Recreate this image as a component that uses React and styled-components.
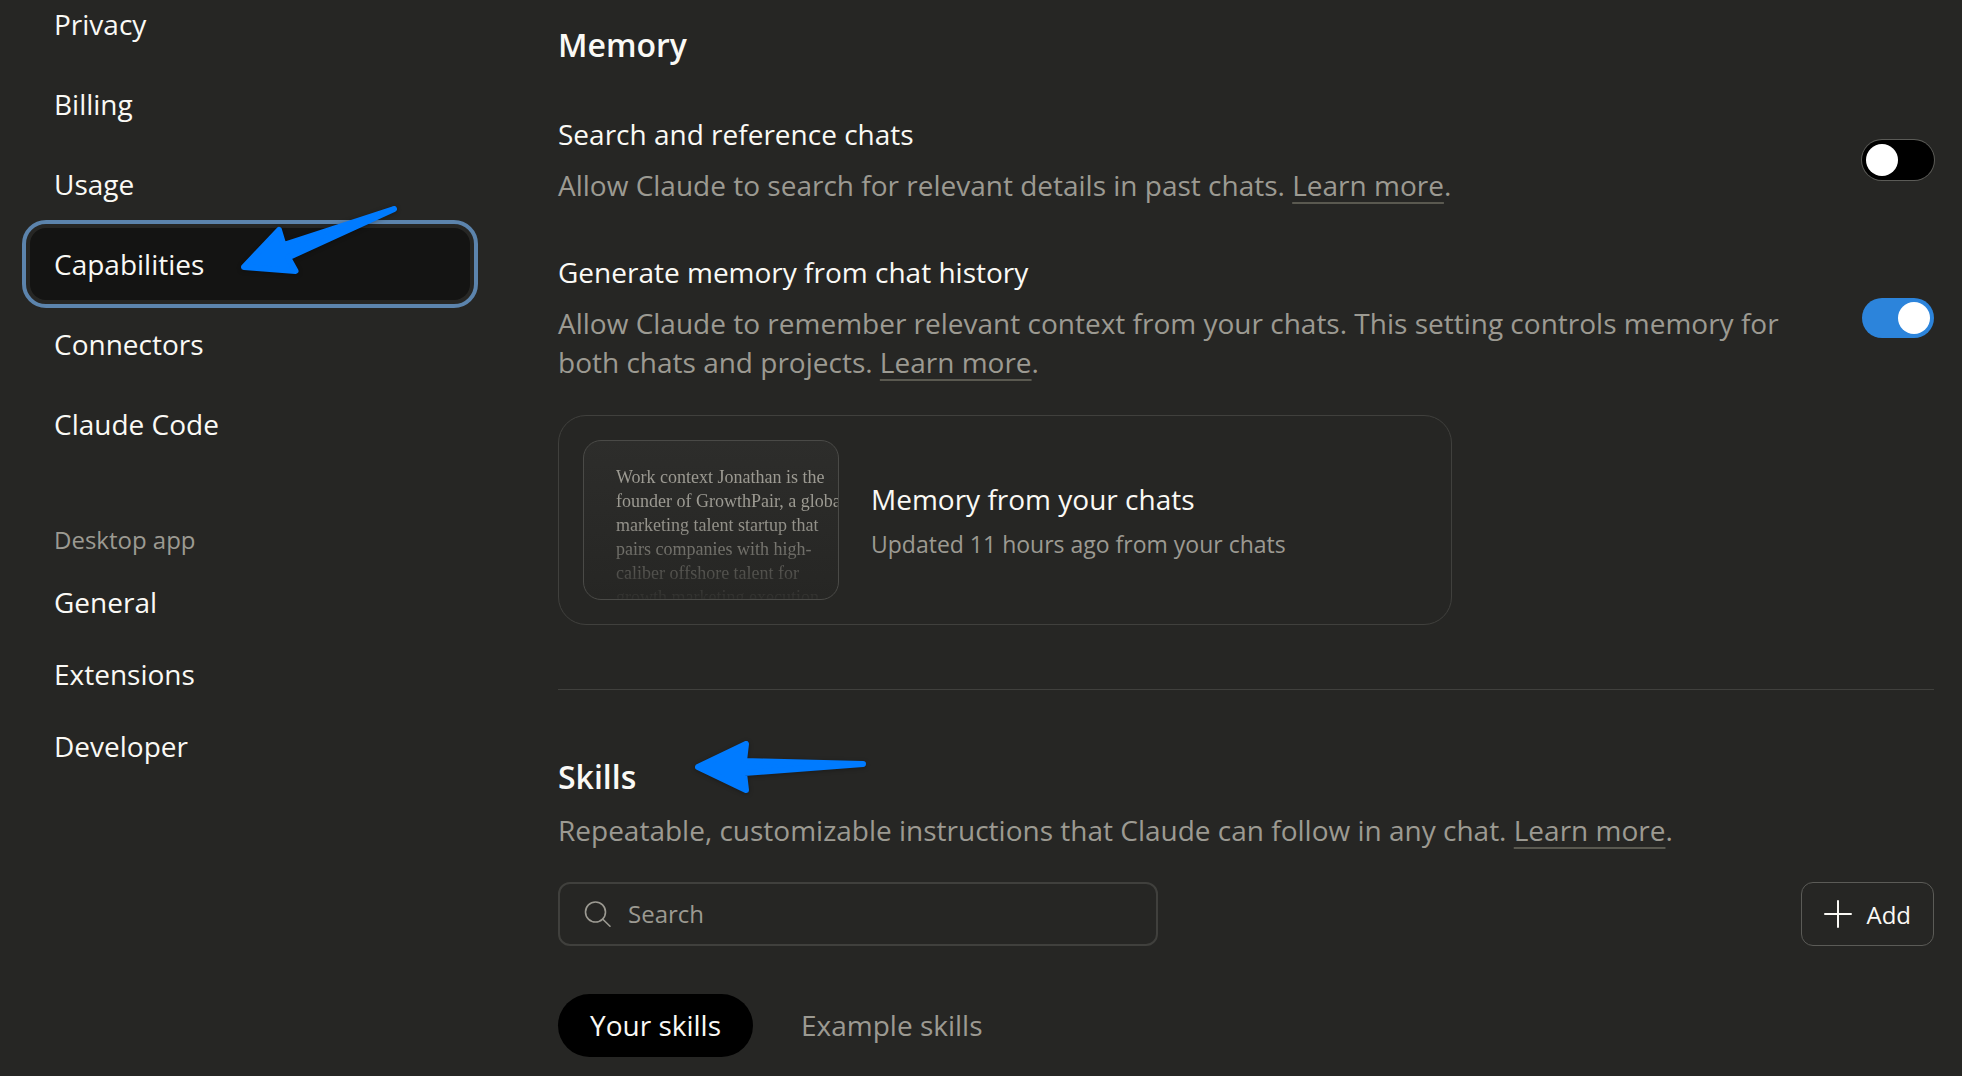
import React, { useState } from "react";
import styled, { createGlobalStyle, css } from "styled-components";

const color = {
  page: "#262624",
  active: "#141413",
  text: "#faf9f5",
  muted: "#9c9a92",
  line: "#40403d",
  lineStrong: "#5b5b57",
  underline: "#5a5950",
  ring: "#5c84ad",
  accent: "#2c84db",
  marker: "#007bff",
};

const GlobalStyle = createGlobalStyle`
  *, *::before, *::after { box-sizing: border-box; }
  html { background: ${color.page}; }
  body {
    margin: 0;
    background: ${color.page};
    color: ${color.text};
    font-family: "Open Sans", "Noto Sans", sans-serif;
    font-size: 28px;
    line-height: 39px;
    -webkit-font-smoothing: antialiased;
  }
  h1, h2, h3, p, ul { margin: 0; padding: 0; }
  button, input { font: inherit; }
`;

const Page = styled.div`
  display: grid;
  grid-template-columns: 440px minmax(0, 1fr);
  column-gap: 88px;
  min-height: 100vh;
  padding: 0 28px 0 30px;
  overflow: hidden;
`;

const Sidebar = styled.nav`
  margin-top: -12px;
`;

const NavList = styled.ul`
  display: flex;
  flex-direction: column;
  gap: ${(p) => p.$gap}px;
  list-style: none;
`;

const NavLink = styled.a`
  position: relative;
  display: flex;
  align-items: center;
  height: 72px;
  padding: 0 24px;
  border-radius: 16px;
  color: ${color.text};
  text-decoration: none;
  ${(p) =>
    p.$active &&
    css`
      background: ${color.active};
      outline: 4px solid ${color.ring};
      outline-offset: 4px;
    `}
`;

const NavHeading = styled.h2`
  padding: 62px 24px 8px;
  color: ${color.muted};
  font-size: 24px;
  font-weight: 400;
  line-height: 36px;
`;

const Main = styled.main`
  padding: 22px 0 18px;
`;

const SectionTitle = styled.h1`
  font-size: 32px;
  font-weight: 600;
  line-height: 45px;
`;

const SettingList = styled.div`
  display: flex;
  flex-direction: column;
  gap: 48px;
  margin-top: 48px;
`;

const SettingRow = styled.div`
  display: flex;
  align-items: center;
  justify-content: space-between;
  gap: 64px;
`;

const SettingText = styled.div`
  display: flex;
  flex-direction: column;
  gap: 12px;
`;

const Description = styled.p`
  color: ${color.muted};
`;

const TextLink = styled.a`
  color: inherit;
  text-decoration: underline 2px ${color.underline};
  text-decoration-skip-ink: none;
  text-underline-offset: 6px;
`;

const Switch = styled.input.attrs({ type: "checkbox", role: "switch" })`
  appearance: none;
  flex: none;
  display: flex;
  width: 72px;
  height: 40px;
  margin: 0;
  padding: 4px;
  border-radius: 20px;
  background: #000;
  box-shadow: 0 0 0 1px ${color.lineStrong};
  cursor: pointer;
  &::before {
    content: "";
    width: 32px;
    height: 32px;
    border-radius: 50%;
    background: #fff;
  }
  &:checked {
    justify-content: flex-end;
    background: ${color.accent};
    box-shadow: none;
  }
`;

const MemoryCard = styled.button`
  display: flex;
  align-items: center;
  gap: 32px;
  width: 65%;
  margin-top: 33px;
  padding: 24px;
  border: 1px solid ${color.line};
  border-radius: 28px;
  background: none;
  color: inherit;
  text-align: left;
`;

const Preview = styled.span`
  flex: none;
  width: 256px;
  height: 160px;
  padding: 24px 0 0 32px;
  overflow: hidden;
  border: 1px solid #4a4a47;
  border-radius: 18px;
  background: linear-gradient(#2d2d2b, #262624);
`;

const PreviewText = styled.span`
  display: block;
  height: 134px;
  color: ${color.muted};
  font-family: "Liberation Serif", serif;
  font-size: 18px;
  line-height: 24px;
  white-space: pre;
  mask-image: linear-gradient(#000 40%, transparent 104%);
`;

const CardText = styled.span`
  display: flex;
  flex-direction: column;
  gap: 8px;
`;

const CardNote = styled.span`
  color: ${color.muted};
  font-size: 23px;
  line-height: 34px;
`;

const Divider = styled.hr`
  height: 1px;
  margin: 64px 0;
  border: 0;
  background: ${color.line};
`;

const SkillsHeader = styled.div`
  display: flex;
  flex-direction: column;
  gap: 12px;
`;

const TitleLine = styled.div`
  display: flex;
  position: relative;
`;

const Toolbar = styled.div`
  display: flex;
  justify-content: space-between;
  margin-top: 32px;
`;

const SearchBox = styled.label`
  display: flex;
  align-items: center;
  gap: 16px;
  width: 600px;
  height: 64px;
  padding: 0 24px;
  border: 2px solid ${color.line};
  border-radius: 12px;
  color: ${color.muted};
`;

const SearchInput = styled.input`
  flex: 1;
  min-width: 0;
  padding: 0;
  border: 0;
  outline: 0;
  background: none;
  color: ${color.text};
  font-size: 24px;
  line-height: 34px;
  &::placeholder {
    color: ${color.muted};
    opacity: 1;
  }
`;

const AddButton = styled.button`
  display: flex;
  align-items: center;
  gap: 14px;
  height: 64px;
  padding: 0 22px;
  border: 1px solid ${color.lineStrong};
  border-radius: 12px;
  background: none;
  color: ${color.text};
  font-size: 24px;
  font-weight: 500;
`;

const Tabs = styled.div`
  display: flex;
  gap: 16px;
  margin-top: 48px;
`;

const Tab = styled.button`
  height: 63px;
  padding: 0 32px;
  border: 0;
  border-radius: 32px;
  background: ${(p) => (p.$active ? "#000" : "none")};
  color: ${(p) => (p.$active ? color.text : color.muted)};
`;

const Marker = styled.svg`
  position: absolute;
  z-index: 1;
  left: ${(p) => p.$left}px;
  top: ${(p) => p.$top}px;
  fill: ${color.marker};
  stroke: ${color.marker};
  stroke-width: 6;
  stroke-linejoin: round;
  overflow: visible;
  pointer-events: none;
  filter: drop-shadow(0 1px 2px rgba(0, 0, 0, 0.3));
`;

const NAV = ["Privacy", "Billing", "Usage", "Capabilities", "Connectors", "Claude Code"];
const DESKTOP_NAV = ["General", "Extensions", "Developer"];
const PREVIEW = [
  "Work context Jonathan is the",
  "founder of GrowthPair, a global",
  "marketing talent startup that",
  "pairs companies with high-",
  "caliber offshore talent for",
  "growth marketing execution",
].join("\n");

function LearnMore() {
  return <TextLink href="#learn-more">Learn more</TextLink>;
}

function Setting({ id, title, defaultChecked, children }) {
  return (
    <SettingRow>
      <SettingText>
        <label htmlFor={id}>{title}</label>
        <Description>{children}</Description>
      </SettingText>
      <Switch id={id} defaultChecked={defaultChecked} />
    </SettingRow>
  );
}

function SearchIcon() {
  return (
    <svg width="28" height="28" viewBox="0 0 28 28" fill="none" stroke="currentColor" strokeWidth="1.6" strokeLinecap="round" aria-hidden="true">
      <circle cx="11.5" cy="12" r="10" />
      <path d="M18.8 19.2 26 26.2" />
    </svg>
  );
}

function PlusIcon() {
  return (
    <svg width="28" height="28" viewBox="0 0 28 28" fill="none" stroke="currentColor" strokeWidth="2" strokeLinecap="round" aria-hidden="true">
      <path d="M14 1v26M1 14h26" />
    </svg>
  );
}

export default function App() {
  const [tab, setTab] = useState("Your skills");
  return (
    <>
      <GlobalStyle />
      <Page>
        <Sidebar aria-label="Settings">
          <NavList $gap={8}>
            {NAV.map((name) => (
              <li key={name}>
                <NavLink href="#settings" $active={name === "Capabilities"}>
                  {name}
                  {name === "Capabilities" && (
                    <Marker $left={211} $top={-22} width="156" height="68" viewBox="0 0 156 68" aria-hidden="true">
                      <path d="M3 61 38 24 42.5 39 153 3 47 51.500 54.500 65Z" />
                    </Marker>
                  )}
                </NavLink>
              </li>
            ))}
          </NavList>
          <NavHeading>Desktop app</NavHeading>
          <NavList $gap={0}>
            {DESKTOP_NAV.map((name) => (
              <li key={name}>
                <NavLink href="#desktop">{name}</NavLink>
              </li>
            ))}
          </NavList>
        </Sidebar>

        <Main>
          <SectionTitle>Memory</SectionTitle>
          <SettingList>
            <Setting id="search-chats" title="Search and reference chats">
              Allow Claude to search for relevant details in past chats. <LearnMore />.
            </Setting>
            <Setting id="generate-memory" title="Generate memory from chat history" defaultChecked>
              Allow Claude to remember relevant context from your chats. This setting controls memory for both chats and projects. <LearnMore />.
            </Setting>
          </SettingList>

          <MemoryCard type="button">
            <Preview>
              <PreviewText>{PREVIEW}</PreviewText>
            </Preview>
            <CardText>
              <span>Memory from your chats</span>
              <CardNote>Updated 11 hours ago from your chats</CardNote>
            </CardText>
          </MemoryCard>

          <Divider />

          <SkillsHeader>
            <TitleLine>
              <SectionTitle as="h2">Skills</SectionTitle>
              <Marker $left={137} $top={-13} width="172" height="52" viewBox="0 0 172 52" aria-hidden="true">
                <path d="M3 26 51 3 49 20 168 23 49 32 51 49Z" />
              </Marker>
            </TitleLine>
            <Description>
              Repeatable, customizable instructions that Claude can follow in any chat. <LearnMore />.
            </Description>
          </SkillsHeader>

          <Toolbar>
            <SearchBox>
              <SearchIcon />
              <SearchInput type="search" placeholder="Search" aria-label="Search skills" />
            </SearchBox>
            <AddButton type="button">
              <PlusIcon />
              Add
            </AddButton>
          </Toolbar>

          <Tabs>
            {["Your skills", "Example skills"].map((name) => (
              <Tab key={name} type="button" $active={tab === name} onClick={() => setTab(name)}>
                {name}
              </Tab>
            ))}
          </Tabs>
        </Main>
      </Page>
    </>
  );
}
